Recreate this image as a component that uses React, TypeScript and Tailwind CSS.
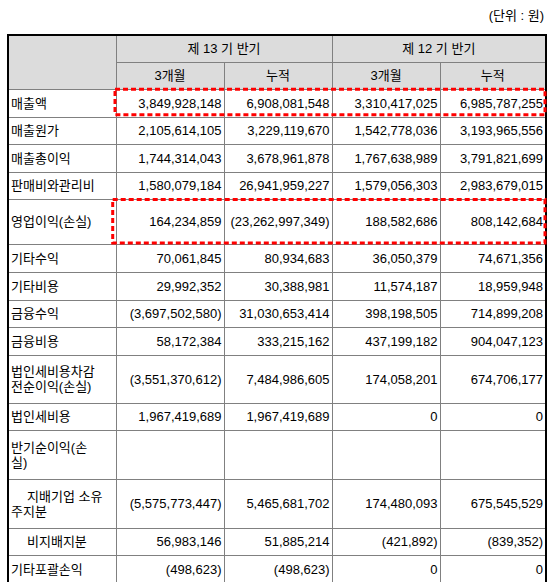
import React from "react";

type Row = {
  label: React.ReactNode;
  values: string[];
  h: string;
};

const rows: Row[] = [
  { label: "매출액", values: ["3,849,928,148", "6,908,081,548", "3,310,417,025", "6,985,787,255"], h: "h-[28px]" },
  { label: "매출원가", values: ["2,105,614,105", "3,229,119,670", "1,542,778,036", "3,193,965,556"], h: "h-[27px]" },
  { label: "매출총이익", values: ["1,744,314,043", "3,678,961,878", "1,767,638,989", "3,791,821,699"], h: "h-[28px]" },
  { label: "판매비와관리비", values: ["1,580,079,184", "26,941,959,227", "1,579,056,303", "2,983,679,015"], h: "h-[27px]" },
  { label: "영업이익(손실)", values: ["164,234,859", "(23,262,997,349)", "188,582,686", "808,142,684"], h: "h-[45px]" },
  { label: "기타수익", values: ["70,061,845", "80,934,683", "36,050,379", "74,671,356"], h: "h-[28px]" },
  { label: "기타비용", values: ["29,992,352", "30,388,981", "11,574,187", "18,959,948"], h: "h-[28px]" },
  { label: "금융수익", values: ["(3,697,502,580)", "31,030,653,414", "398,198,505", "714,899,208"], h: "h-[27px]" },
  { label: "금융비용", values: ["58,172,384", "333,215,162", "437,199,182", "904,047,123"], h: "h-[28px]" },
  {
    label: (
      <>
        법인세비용차감
        <br />
        전순이익(손실)
      </>
    ),
    values: ["(3,551,370,612)", "7,484,986,605", "174,058,201", "674,706,177"],
    h: "h-[48px]",
  },
  { label: "법인세비용", values: ["1,967,419,689", "1,967,419,689", "0", "0"], h: "h-[27px]" },
  {
    label: (
      <>
        반기순이익(손
        <br />
        실)
      </>
    ),
    values: ["", "", "", ""],
    h: "h-[49px]",
  },
  {
    label: (
      <>
        <span className="pl-[16px]">지배기업 소유</span>
        <br />
        주지분
      </>
    ),
    values: ["(5,575,773,447)", "5,465,681,702", "174,480,093", "675,545,529"],
    h: "h-[49px]",
  },
  {
    label: <span className="pl-[16px]">비지배지분</span>,
    values: ["56,983,146", "51,885,214", "(421,892)", "(839,352)"],
    h: "h-[27px]",
  },
  { label: "기타포괄손익", values: ["(498,623)", "(498,623)", "0", "0"], h: "h-[28px]" },
];

const cell = "border border-[#808080] text-[13px] leading-[15px] text-black";

export default function App() {
  return (
    <div
      className="w-[552px] h-[582px] overflow-hidden bg-white pt-[8px] pl-[7px] pr-[5px]"
      style={{ fontFamily: '"Liberation Sans", "Noto Sans CJK KR", sans-serif' }}
    >
      <div className="h-[26px] pr-[3px] text-right text-[13px] leading-[15px] text-black">(단위 : 원)</div>

      <div className="relative w-[540px] border-2 border-black">
        <table className="w-[536px] table-fixed border-collapse border-hidden">
          <colgroup>
            <col className="w-[107px]" />
            <col className="w-[108px]" />
            <col className="w-[108px]" />
            <col className="w-[108px]" />
            <col className="w-[105px]" />
          </colgroup>
          <thead>
            <tr className="h-[26px]">
              <th rowSpan={2} className={`${cell} bg-[#dcdcdc]`}></th>
              <th colSpan={2} className={`${cell} bg-[#dcdcdc] text-center font-normal`}>
                제 13 기 반기
              </th>
              <th colSpan={2} className={`${cell} bg-[#dcdcdc] text-center font-normal`}>
                제 12 기 반기
              </th>
            </tr>
            <tr className="h-[27px]">
              <th className={`${cell} bg-[#dcdcdc] text-center font-normal`}>3개월</th>
              <th className={`${cell} bg-[#dcdcdc] text-center font-normal`}>누적</th>
              <th className={`${cell} bg-[#dcdcdc] text-center font-normal`}>3개월</th>
              <th className={`${cell} bg-[#dcdcdc] text-center font-normal`}>누적</th>
            </tr>
          </thead>
          <tbody>
            {rows.map((r, i) => (
              <tr key={i} className={r.h}>
                <td className={`${cell} pl-[2px] text-left align-middle whitespace-nowrap`}>{r.label}</td>
                {r.values.map((v, j) => (
                  <td key={j} className={`${cell} pr-[2px] text-right align-middle whitespace-nowrap`}>
                    {v}
                  </td>
                ))}
              </tr>
            ))}
          </tbody>
        </table>

        {/* highlight boxes */}
        <svg
          className="pointer-events-none absolute left-[-2px] top-[-2px] overflow-visible"
          width="540"
          height="560"
        >
          <rect x="108" y="55.3" width="430" height="25.4" fill="none" stroke="#ff0000" strokeWidth="3" strokeDasharray="5 3" />
          <rect x="105.7" y="165.5" width="432.3" height="43.5" fill="none" stroke="#ff0000" strokeWidth="3" strokeDasharray="5 3" />
        </svg>
      </div>
    </div>
  );
}
